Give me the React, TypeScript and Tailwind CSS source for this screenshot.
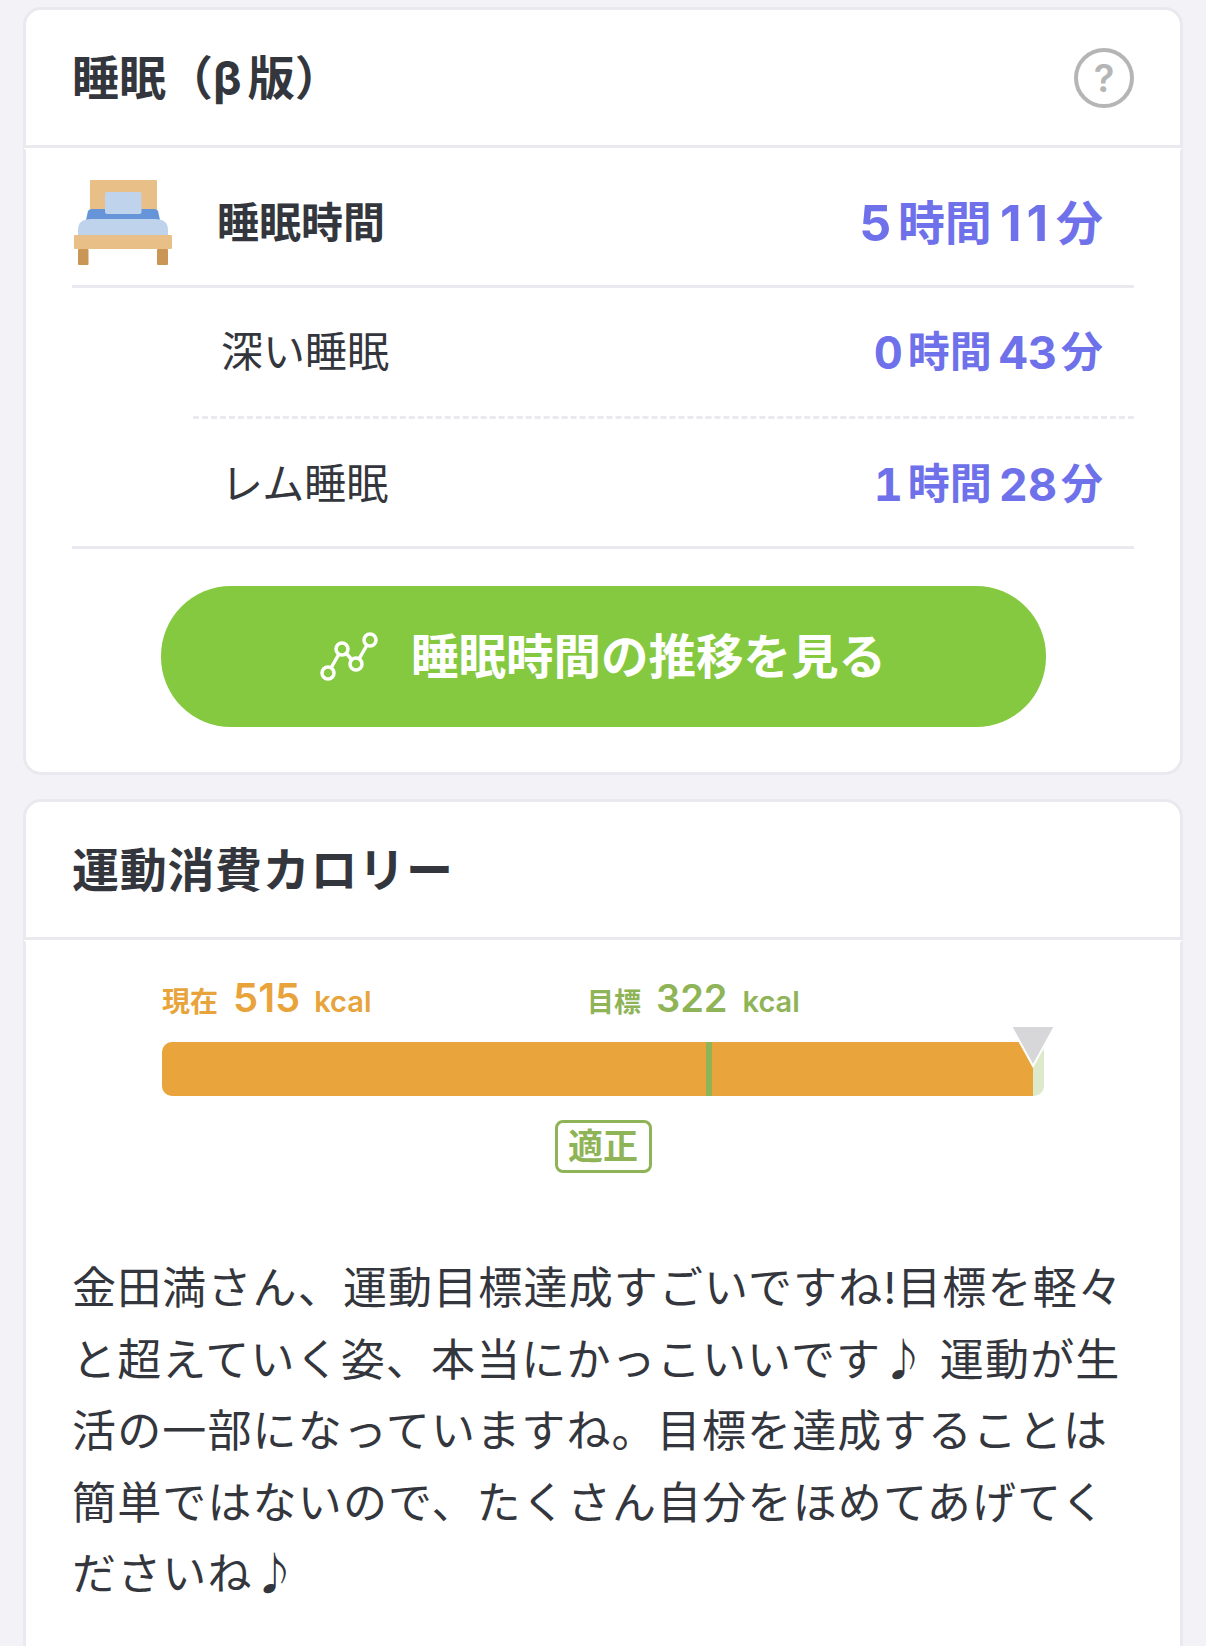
import React from 'react';

const FONT = "font-['Inter','Noto_Sans_CJK_JP',sans-serif]";

const BedIcon = () => (
  <svg width="98" height="85" viewBox="0 0 98 85" className="block">
    <rect x="16" y="0" width="67" height="40" rx="1" fill="#e8bf87" />
    <path d="M12 40 L14 31 Q15 29 18 29 H80 Q83 29 84 31 L86 40 Z" fill="#6595d8" />
    <rect x="31" y="12" width="36.500" height="22" rx="2" fill="#bfd3ec" />
    <path d="M4 56 V50 Q4 39 17 39 H81 Q94 39 94 50 V56 Z" fill="#bfd3ec" />
    <rect x="0" y="55" width="98" height="14" rx="1" fill="#e8bf87" />
    <rect x="4" y="69" width="10.500" height="16" rx="1" fill="#c99655" />
    <rect x="83" y="69" width="11" height="16" rx="1" fill="#c99655" />
  </svg>
);

const ChartIcon = () => (
  <svg width="58" height="50" viewBox="0 0 58 50" fill="none" stroke="#fff" strokeWidth="3.500" className="block">
    <circle cx="8" cy="41" r="6" />
    <circle cx="22" cy="17" r="6" />
    <circle cx="36" cy="32" r="6" />
    <circle cx="50" cy="8" r="6" />
    <path d="M11 36 L19 22 M26 21 L32 28 M39 27 L47 13" />
  </svg>
);

const SubValue = ({ h, m }: { h: string; m: string }) => (
  <span className="flex items-center font-semibold text-[#6f71ea]">
    <span className="text-[45px] leading-none font-bold tabular-nums">{h}</span>
    <span className="ml-[5px] text-[42px] leading-none">時間</span>
    <span className="ml-[7px] text-[45px] leading-none font-bold tabular-nums">{m}</span>
    <span className="ml-[4px] text-[42px] leading-none">分</span>
  </span>
);

const SubRow = ({ label, h, m, height }: { label: string; h: string; m: string; height: string }) => (
  <div className={`flex items-center justify-between pl-[28px] pr-[31px] ${height}`}>
    <span className="text-[42px] leading-none text-[#34363d]">{label}</span>
    <SubValue h={h} m={m} />
  </div>
);

export default function App() {
  return (
    <div className={`${FONT} h-[1646px] w-[1206px] overflow-hidden bg-[#f2f2f7] px-[23px] pt-[7px]`}>
      <section>
        <header className="flex h-[141px] items-center justify-between rounded-t-[18px] border-[3px] border-[#e9e9ef] bg-white pr-[46px] pl-[46px]">
          <h2 className="text-[47px] leading-none font-bold text-[#34363d]">
            睡眠（β<span className="ml-[6px]">版</span>）
          </h2>
          <div className="flex h-[60px] w-[60px] items-center justify-center rounded-full border-[4px] border-[#b5b5b5] text-[38px] leading-none font-semibold text-[#b5b5b5]">
            ?
          </div>
        </header>
        <div className="h-[627px] rounded-b-[18px] border-x-[3px] border-t-[2px] border-b-[3px] border-x-[#e9e9ef] border-t-white border-b-[#e9e9ef] bg-white px-[46px]">
          <div className="flex h-[138px] items-center border-b-[3px] border-[#e9e9ef] pt-[10px] pr-[31px] pl-[2px]">
            <BedIcon />
            <span className="ml-[45px] text-[42px] leading-none font-bold text-[#34363d]">睡眠時間</span>
            <span className="ml-auto flex items-center font-semibold text-[#6f71ea]">
              <span className="text-[50px] leading-none font-bold tabular-nums">5</span>
              <span className="ml-[6px] text-[47px] leading-none">時間</span>
              <span className="ml-[8px] text-[50px] leading-none font-bold tracking-[5px]">11</span>
              <span className="ml-[3px] text-[47px] leading-none">分</span>
            </span>
          </div>
          <div className="ml-[121px]">
            <div className="border-b-[3px] border-dashed border-[#e9e9ef]">
              <SubRow label="深い睡眠" h="0" m="43" height="h-[128px]" />
            </div>
            <SubRow label="レム睡眠" h="1" m="28" height="h-[127px] pt-[3px]" />
          </div>
          <div className="border-t-[3px] border-[#e9e9ef] pt-[37px]">
            <button className="mx-auto flex h-[141px] w-[885px] items-center justify-center rounded-[70px] bg-[#85c940] text-[47.500px] leading-none font-semibold text-white">
              <ChartIcon />
              <span className="ml-[33px]">睡眠時間の推移を見る</span>
            </button>
          </div>
        </div>
      </section>

      <section className="mt-[24px]">
        <header className="flex h-[141px] items-center rounded-t-[18px] border-[3px] border-[#e9e9ef] bg-white pl-[46px]">
          <h2 className="text-[47px] leading-none font-bold tracking-[0.7px] text-[#34363d]">運動消費カロリー</h2>
        </header>
        <div className="h-[800px] border-x-[3px] border-t-[2px] border-x-[#e9e9ef] border-t-white bg-white px-[46px]">
          <div className="mx-[90px] pt-[26px]">
            <div className="flex h-[50px] items-baseline font-semibold">
              <div className="w-[425px] text-[#e8a33b]">
                <span className="text-[28px]">現在</span>
                <span className="ml-[15px] text-[40px]">515</span>
                <span className="ml-[14px] text-[29px]">kcal</span>
              </div>
              <div className="text-[#8fb457]">
                <span className="text-[27px]">目標</span>
                <span className="ml-[15px] text-[38px]">322</span>
                <span className="ml-[15px] text-[29px]">kcal</span>
              </div>
            </div>
            <div className="relative mt-[24px] h-[54px] w-[882px]">
              <div className="h-full overflow-hidden rounded-[10px] bg-[#dde9cb]">
                <div className="h-full w-[871px] bg-[#e9a53b]" />
              </div>
              <div className="absolute top-0 left-[544px] h-full w-[6px] bg-[#8fb457]" />
              <svg width="46" height="42" viewBox="0 0 46 42" className="absolute -top-[16px] left-[848px]">
                <path d="M1 0 H45 L23 40 Z" fill="#d7d7d9" stroke="#fff" strokeWidth="2" />
              </svg>
            </div>
            <div className="mt-[24px] flex justify-center">
              <span className="flex h-[53px] w-[97px] items-center justify-center rounded-[8px] border-[3px] border-[#8fb457] text-[35px] leading-none font-semibold text-[#8fb457]">
                適正
              </span>
            </div>
          </div>
          <p className="mt-[80px] text-[44px] leading-[71.500px] tracking-[1.150px] text-[#34363d]">
            金田満さん、運動目標達成すごいですね!目標を軽々と超えていく姿、本当にかっこいいです♪ 運動が生活の一部になっていますね。目標を達成することは簡単ではないので、たくさん自分をほめてあげてくださいね♪
          </p>
        </div>
      </section>
    </div>
  );
}
